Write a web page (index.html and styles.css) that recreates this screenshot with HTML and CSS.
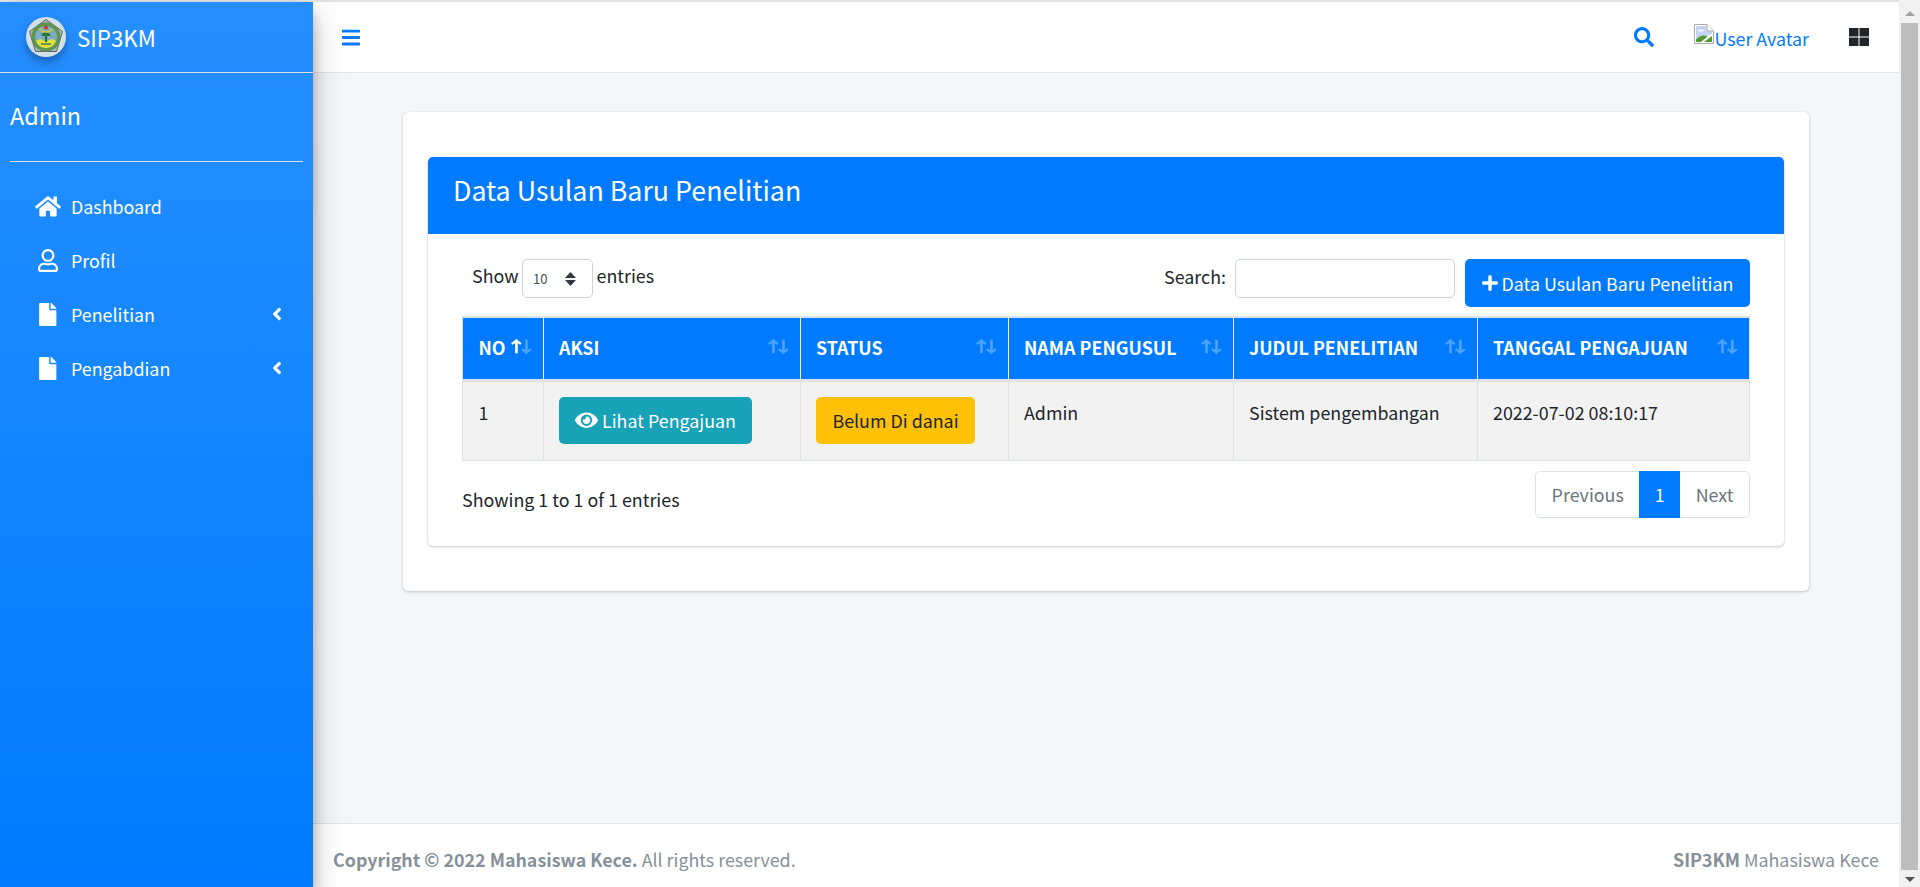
FILE: index.html
```html
<!DOCTYPE html>
<html lang="id">
<head>
<meta charset="utf-8">
<title>SIP3KM</title>
<link rel="stylesheet" href="styles.css">
</head>
<body>
<div class="app">
  <aside class="sidebar">
    <a class="brand">
      <svg class="logo" viewBox="0 0 40 40">
        <circle cx="20" cy="20" r="20" fill="#d5dfe9"/>
        <path d="M20 2.5 36.5 14.5 30.5 34.5H9.5L3.5 14.5Z" fill="#a9bcb4" stroke="#59646b" stroke-width="1"/>
        <circle cx="20" cy="20" r="14.5" fill="#5f9450"/>
        <circle cx="20" cy="20" r="11" fill="#7fabc0"/>
        <path d="M10 24C14 21 17 22 20 25 23 22 26 21 30 24 28 29 24 31 20 31S12 29 10 24Z" fill="#dfe23a"/>
        <path d="M20 15v10" stroke="#1f6f3a" stroke-width="2"/>
        <path d="M15.5 19a4.5 3.5 0 0 1 9 0Z" fill="#1f7a3a"/>
        <circle cx="20" cy="10.5" r="2" fill="#d3322e"/>
        <path d="M14 11a6 4 0 0 0 12 0" fill="none" stroke="#d8c83a" stroke-width="1.4"/>
        <path d="M15 27h10" stroke="#3f6f45" stroke-width="1.4"/>
      </svg>
      <span class="brand-text">SIP3KM</span>
    </a>
    <div class="user-panel">Admin</div>
    <nav class="menu">
      <a class="menu-item">
        <span class="menu-icon"><svg class="i-home" viewBox="0 0 576 512"><path d="M280.37 148.26L96 300.11V464a16 16 0 0 0 16 16l112.06-.29a16 16 0 0 0 15.92-16V368a16 16 0 0 1 16-16h64a16 16 0 0 1 16 16v95.64a16 16 0 0 0 16 16.05L464 480a16 16 0 0 0 16-16V300L295.67 148.26a12.19 12.19 0 0 0-15.3 0zM571.6 251.47L488 182.56V44.05a12 12 0 0 0-12-12h-56a12 12 0 0 0-12 12v72.61L318.47 43a48 48 0 0 0-61 0L4.34 251.47a12 12 0 0 0-1.6 16.9l25.5 31A12 12 0 0 0 45.15 301l235.22-193.74a12.19 12.19 0 0 1 15.3 0L530.9 301a12 12 0 0 0 16.9-1.6l25.5-31a12 12 0 0 0-1.7-16.93z"/></svg></span>
        <span class="menu-label">Dashboard</span>
      </a>
      <a class="menu-item">
        <span class="menu-icon"><svg class="i-user" viewBox="0 0 448 512"><path d="M313.6 304c-28.7 0-42.5 16-89.6 16-47.1 0-60.8-16-89.6-16C60.2 304 0 364.2 0 438.4V464c0 26.5 21.5 48 48 48h352c26.5 0 48-21.5 48-48v-25.6c0-74.2-60.2-134.4-134.4-134.4zM400 464H48v-25.6c0-47.6 38.8-86.4 86.4-86.4 14.6 0 38.3 16 89.6 16 51.7 0 74.9-16 89.6-16 47.6 0 86.4 38.8 86.4 86.4V464zM224 288c79.5 0 144-64.5 144-144S303.5 0 224 0 80 64.5 80 144s64.5 144 144 144zm0-240c52.9 0 96 43.1 96 96s-43.1 96-96 96-96-43.1-96-96 43.1-96 96-96z"/></svg></span>
        <span class="menu-label">Profil</span>
      </a>
      <a class="menu-item">
        <span class="menu-icon"><svg class="i-file" viewBox="0 0 384 512"><path d="M224 136V0H24C10.7 0 0 10.7 0 24v464c0 13.3 10.7 24 24 24h336c13.3 0 24-10.7 24-24V160H248c-13.2 0-24-10.8-24-24zm160-14.1v6.1H256V0h6.1c6.4 0 12.5 2.5 17 7l97.9 98c4.5 4.5 7 10.6 7 16.9z"/></svg></span>
        <span class="menu-label">Penelitian</span>
        <svg class="i-angle" viewBox="0 0 256 512"><path d="M31.7 239l136-136c9.4-9.4 24.6-9.4 33.9 0l22.6 22.6c9.4 9.4 9.4 24.6 0 33.9L127.9 256l96.4 96.4c9.4 9.4 9.4 24.6 0 33.9L201.7 409c-9.4 9.4-24.6 9.4-33.9 0l-136-136c-9.5-9.4-9.5-24.6-.1-34z"/></svg>
      </a>
      <a class="menu-item">
        <span class="menu-icon"><svg class="i-file" viewBox="0 0 384 512"><path d="M224 136V0H24C10.7 0 0 10.7 0 24v464c0 13.3 10.7 24 24 24h336c13.3 0 24-10.7 24-24V160H248c-13.2 0-24-10.8-24-24zm160-14.1v6.1H256V0h6.1c6.4 0 12.5 2.5 17 7l97.9 98c4.5 4.5 7 10.6 7 16.9z"/></svg></span>
        <span class="menu-label">Pengabdian</span>
        <svg class="i-angle" viewBox="0 0 256 512"><path d="M31.7 239l136-136c9.4-9.4 24.6-9.4 33.9 0l22.6 22.6c9.4 9.4 9.4 24.6 0 33.9L127.9 256l96.4 96.4c9.4 9.4 9.4 24.6 0 33.9L201.7 409c-9.4 9.4-24.6 9.4-33.9 0l-136-136c-9.5-9.4-9.5-24.6-.1-34z"/></svg>
      </a>
    </nav>
  </aside>

  <div class="main">
    <header class="navbar">
      <a class="nav-bars"><svg class="i-bars" viewBox="0 0 448 512"><path d="M16 132h416c8.837 0 16-7.163 16-16V76c0-8.837-7.163-16-16-16H16C7.163 60 0 67.163 0 76v40c0 8.837 7.163 16 16 16zm0 160h416c8.837 0 16-7.163 16-16v-40c0-8.837-7.163-16-16-16H16c-8.837 0-16 7.163-16 16v40c0 8.837 7.163 16 16 16zm0 160h416c8.837 0 16-7.163 16-16v-40c0-8.837-7.163-16-16-16H16c-8.837 0-16 7.163-16 16v40c0 8.837 7.163 16 16 16z"/></svg></a>
      <div class="nav-right">
        <a class="nav-search"><svg class="i-search" viewBox="0 0 512 512"><path d="M505 442.7L405.3 343c-4.5-4.5-10.6-7-17-7H372c27.6-35.3 44-79.7 44-128C416 93.1 322.9 0 208 0S0 93.1 0 208s93.1 208 208 208c48.3 0 92.7-16.4 128-44v16.3c0 6.4 2.5 12.5 7 17l99.7 99.7c9.4 9.4 24.6 9.4 33.9 0l28.3-28.3c9.4-9.4 9.4-24.6.1-34zM208 336c-70.7 0-128-57.2-128-128 0-70.7 57.2-128 128-128 70.7 0 128 57.2 128 128 0 70.7-57.2 128-128 128z"/></svg></a>
        <a class="nav-avatar">
          <svg class="broken" viewBox="0 0 20 20">
            <path d="M.5.5H13L19.5 7V19.5H.5Z" fill="#fff" stroke="#a9a9a9"/>
            <path d="M2 2H12.5V7.5H18V10L2 16Z" fill="#c3d4f2"/>
            <path d="M2 18V15.5C6 11 10 10.5 13.5 12.5L7 18Z" fill="#4f9a32"/>
            <path d="M10 18 18 12V18Z" fill="#4f9a32"/>
            <path d="M4 6.5h5.5" stroke="#fff" stroke-width="1.6"/>
            <path d="M13 .5V7H19.5" fill="#fff" stroke="#a9a9a9"/>
          </svg><span class="avatar-alt">User Avatar</span>
        </a>
        <a class="nav-grid"><svg class="i-grid" viewBox="0 0 20 18"><path d="M0 0H9.5V8.5H0ZM10.5 0H20V8.5H10.5ZM0 9.5H9.5V18H0ZM10.5 9.5H20V18H10.5Z"/></svg></a>
      </div>
    </header>

    <main class="content">
      <section class="outer-card">
        <div class="inner-card">
          <div class="inner-header"><h3 class="inner-title">Data Usulan Baru Penelitian</h3></div>
          <div class="inner-body">
            <div class="controls">
              <label class="length">Show <select class="length-select"><option>10</option></select> entries</label>
              <div class="controls-right">
                <label class="search">Search: <input class="search-input" type="text"></label>
                <a class="btn btn-primary"><svg class="i-plus" viewBox="0 0 448 512"><path d="M416 208H272V64c0-17.67-14.33-32-32-32h-32c-17.67 0-32 14.33-32 32v144H32c-17.67 0-32 14.33-32 32v32c0 17.67 14.33 32 32 32h144v144c0 17.67 14.33 32 32 32h32c17.67 0 32-14.33 32-32V304h144c17.67 0 32-14.33 32-32v-32c0-17.67-14.33-32-32-32z"/></svg> Data Usulan Baru Penelitian</a>
              </div>
            </div>
            <table class="data-table">
              <thead>
                <tr>
                  <th class="c-no sorted">NO</th>
                  <th class="c-aksi">AKSI</th>
                  <th class="c-status">STATUS</th>
                  <th class="c-nama">NAMA PENGUSUL</th>
                  <th class="c-judul">JUDUL PENELITIAN</th>
                  <th class="c-tgl">TANGGAL PENGAJUAN</th>
                </tr>
              </thead>
              <tbody>
                <tr>
                  <td>1</td>
                  <td><a class="btn btn-info"><svg class="i-eye" viewBox="0 0 576 512"><path d="M572.52 241.4C518.29 135.59 410.93 64 288 64S57.68 135.64 3.48 241.41a32.35 32.35 0 0 0 0 29.19C57.71 376.41 165.07 448 288 448s230.32-71.64 284.52-177.41a32.35 32.35 0 0 0 0-29.19zM288 400a144 144 0 1 1 144-144 143.93 143.93 0 0 1-144 144zm0-240a95.31 95.31 0 0 0-25.31 3.79 47.85 47.85 0 0 1-66.9 66.9A95.78 95.78 0 1 0 288 160z"/></svg> Lihat Pengajuan</a></td>
                  <td><a class="btn btn-warning">Belum Di danai</a></td>
                  <td>Admin</td>
                  <td>Sistem pengembangan</td>
                  <td>2022-07-02 08:10:17</td>
                </tr>
              </tbody>
            </table>
            <div class="table-foot">
              <div class="info">Showing 1 to 1 of 1 entries</div>
              <ul class="pagination">
                <li class="page">Previous</li>
                <li class="page active">1</li>
                <li class="page">Next</li>
              </ul>
            </div>
          </div>
        </div>
      </section>
    </main>

    <footer class="footer">
      <div><strong>Copyright © 2022 Mahasiswa Kece.</strong> All rights reserved.</div>
      <div><strong>SIP3KM</strong> Mahasiswa Kece</div>
    </footer>
  </div>

  <div class="scrollbar">
    <span class="scroll-up"></span>
    <span class="scroll-thumb"></span>
    <span class="scroll-down"></span>
  </div>
</div>
</body>
</html>
```

FILE: styles.css
```css
* { box-sizing: border-box; }
html, body { margin: 0; height: 100%; overflow: hidden; }
body {
  font-family: "Noto Sans CJK SC", "Noto Sans", sans-serif;
  font-size: 17.85px;
  line-height: 30px;
  color: #212529;
  background: #e3e3e3;
}
a { text-decoration: none; color: inherit; }
svg { display: block; fill: currentColor; }

.app { display: flex; height: 887px; padding-top: 2px; }

/* sidebar */
.sidebar {
  width: 313px;
  flex: none;
  background: linear-gradient(180deg, #268fff, #007bff);
  color: #fff;
  box-shadow: 0 14px 28px rgba(0,0,0,.25), 0 10px 10px rgba(0,0,0,.22);
  position: relative;
  z-index: 2;
}
.brand {
  display: flex;
  align-items: center;
  height: 71px;
  padding-left: 26px;
  border-bottom: 1px solid #dee2e6;
  gap: 11px;
}
.logo { width: 40px; height: 40px; filter: drop-shadow(0 5px 5px rgba(0,0,0,.3)); }
.brand-text { font-size: 22.3px; }
.user-panel {
  margin: 0 10px;
  height: 89px;
  padding-top: 27px;
  font-size: 23.4px;
  line-height: 30px;
  border-bottom: 1px solid #dee2e6;
}
.menu { display: flex; flex-direction: column; padding: 17px 0 0 25px; }
.menu-item { display: flex; align-items: center; height: 54px; }
.menu-icon { width: 46px; display: flex; justify-content: center; flex: none; }
.i-home { width: 26px; height: 23px; }
.i-user { width: 20px; height: 23px; }
.i-file { width: 17.5px; height: 23px; }
.i-angle { width: 10px; height: 20px; margin-left: auto; margin-right: 31px; }

/* main column */
.main { flex: 1; display: flex; flex-direction: column; min-width: 0; background: #f4f6f9; }
.navbar {
  height: 71px;
  flex: none;
  background: #fff;
  border-bottom: 1px solid #dee2e6;
  display: flex;
  align-items: center;
  justify-content: space-between;
  color: #007bff;
  padding: 0 30px 0 29px;
}
.i-bars { width: 18px; height: 21px; }
.nav-right { display: flex; align-items: center; }
.i-search { width: 20px; height: 20px; }
.nav-avatar { display: flex; align-items: flex-end; margin-left: 40px; }
.broken { width: 20px; height: 20px; margin-bottom: 8px; }
.avatar-alt { line-height: 30px; position: relative; top: 1px; }
.nav-grid { margin-left: 40px; color: #212529; }
.i-grid { width: 20px; height: 18px; }

.content { flex: 1; padding: 39px 90px 0; }
.outer-card {
  background: #fff;
  border-radius: 5px;
  box-shadow: 0 0 1px rgba(0,0,0,.125), 0 1px 3px rgba(0,0,0,.2);
  padding: 45px 25px;
}
.inner-card {
  border-radius: 5px;
  box-shadow: 0 0 1px rgba(0,0,0,.125), 0 1px 3px rgba(0,0,0,.2);
  height: 389px;
}
.inner-header {
  height: 77px;
  background: #007bff;
  border-radius: 5px 5px 0 0;
  color: #fff;
  display: flex;
  align-items: center;
  padding: 0 0 12px 25px;
}
.inner-title { margin: 0; font-size: 26.8px; font-weight: 400; line-height: 34px; }
.inner-body { padding: 25px 34px 0; }

.controls { display: flex; justify-content: space-between; align-items: flex-start; padding-left: 10px; }
.length { display: flex; align-items: flex-start; gap: 3.5px; height: 39px; line-height: 32px; }
.length-select {
  appearance: none;
  width: 71px;
  height: 39px;
  border: 1px solid #ced4da;
  border-radius: 5px;
  font: 13px/1 "Noto Sans CJK SC", sans-serif;
  color: #495057;
  padding-left: 10px;
  background: #fff url("data:image/svg+xml,%3Csvg xmlns='http://www.w3.org/2000/svg' width='11' height='14'%3E%3Cpath d='M5.5 0 11 6H0ZM5.5 14 0 8H11Z' fill='%23343a40'/%3E%3C/svg%3E") no-repeat right 16px center;
}
.controls-right { display: flex; align-items: flex-start; gap: 10px; }
.search { display: flex; align-items: flex-start; gap: 9px; height: 39px; line-height: 34px; }
.search-input { width: 220px; height: 39px; border: 1px solid #ced4da; border-radius: 5px; background: #fff; }

.btn { display: inline-flex; align-items: center; justify-content: center; border-radius: 5px; line-height: 30px; }
.btn-primary { background: #007bff; color: #fff; width: 285px; height: 48px; gap: 4px; padding-bottom: 1px; }
.btn-info { background: #17a2b8; color: #fff; width: 193px; height: 47px; gap: 4px; }
.btn-warning { background: #ffc107; color: #212529; width: 159px; height: 47px; }
.i-plus { width: 16px; height: 18px; }
.i-eye { width: 23px; height: 20.5px; }

.data-table {
  width: 1287px;
  table-layout: fixed;
  border-collapse: collapse;
  margin-top: 9px;
}
.data-table th, .data-table td { border: 1px solid #dee2e6; text-align: left; }
.data-table th {
  height: 63px;
  background: #007bff;
  color: #fff;
  font-weight: 700;
  padding: 0 15px 2px;
  border-bottom: 3px solid #dee2e6;
  border-top: 2px solid #dee2e6;
  border-left-color: #fff;
  border-right-color: #fff;
  position: relative;
}
.data-table th:first-child { border-left-color: #dee2e6; padding-left: 15.5px; }
.data-table th:last-child { border-right-color: #dee2e6; }
.data-table th::before, .data-table th::after {
  position: absolute;
  top: 13px;
  line-height: 30px;
  opacity: .3;
  font-weight: 700;
  font-size: 15px;
  transform: scaleX(1.35);
  -webkit-text-stroke: .4px currentColor;
}
.data-table th::before { content: "\2191"; right: 19px; }
.data-table th::after { content: "\2193"; right: 9px; }
.data-table th.sorted::before { opacity: 1; }
.data-table td { background: #f2f2f2; height: 80px; padding: 15px 15px 0; vertical-align: top; }
.data-table td:first-child { padding-left: 15.5px; }
.c-no { width: 81px; }
.c-aksi { width: 257px; }
.c-status { width: 208px; }
.c-nama { width: 225px; }
.c-judul { width: 244px; }
.c-tgl { width: 272px; }

.table-foot { display: flex; justify-content: space-between; align-items: flex-start; margin-top: 10px; }
.info { padding-top: 13px; }
.pagination { display: flex; list-style: none; margin: 0; padding: 0; border: 1px solid #dee2e6; border-radius: 5px; height: 47px; color: #6c757d; }
.page { display: flex; align-items: center; padding: 0 15.5px; }
.page.active { background: #007bff; color: #fff; margin: -1px 0; }

.footer {
  height: 64px;
  flex: none;
  background: #fff;
  border-top: 1px solid #dee2e6;
  display: flex;
  justify-content: space-between;
  align-items: center;
  padding: 6px 20px 0 20px;
  color: #869099;
}

/* scrollbar */
.scrollbar { width: 21px; flex: none; background: #f1f1f1; display: flex; flex-direction: column; align-items: center; margin-top: -2px; padding: 0 2px; }
.scroll-up, .scroll-down { width: 0; height: 0; flex: none; border-left: 5px solid transparent; border-right: 5px solid transparent; }
.scroll-up { border-bottom: 5px solid #a3a3a3; margin: 11px 0 7px; }
.scroll-thumb { flex: 1; width: 17px; background: #bdbdbd; }
.scroll-down { border-top: 5px solid #505050; margin: 7px 0 5px; }
```
